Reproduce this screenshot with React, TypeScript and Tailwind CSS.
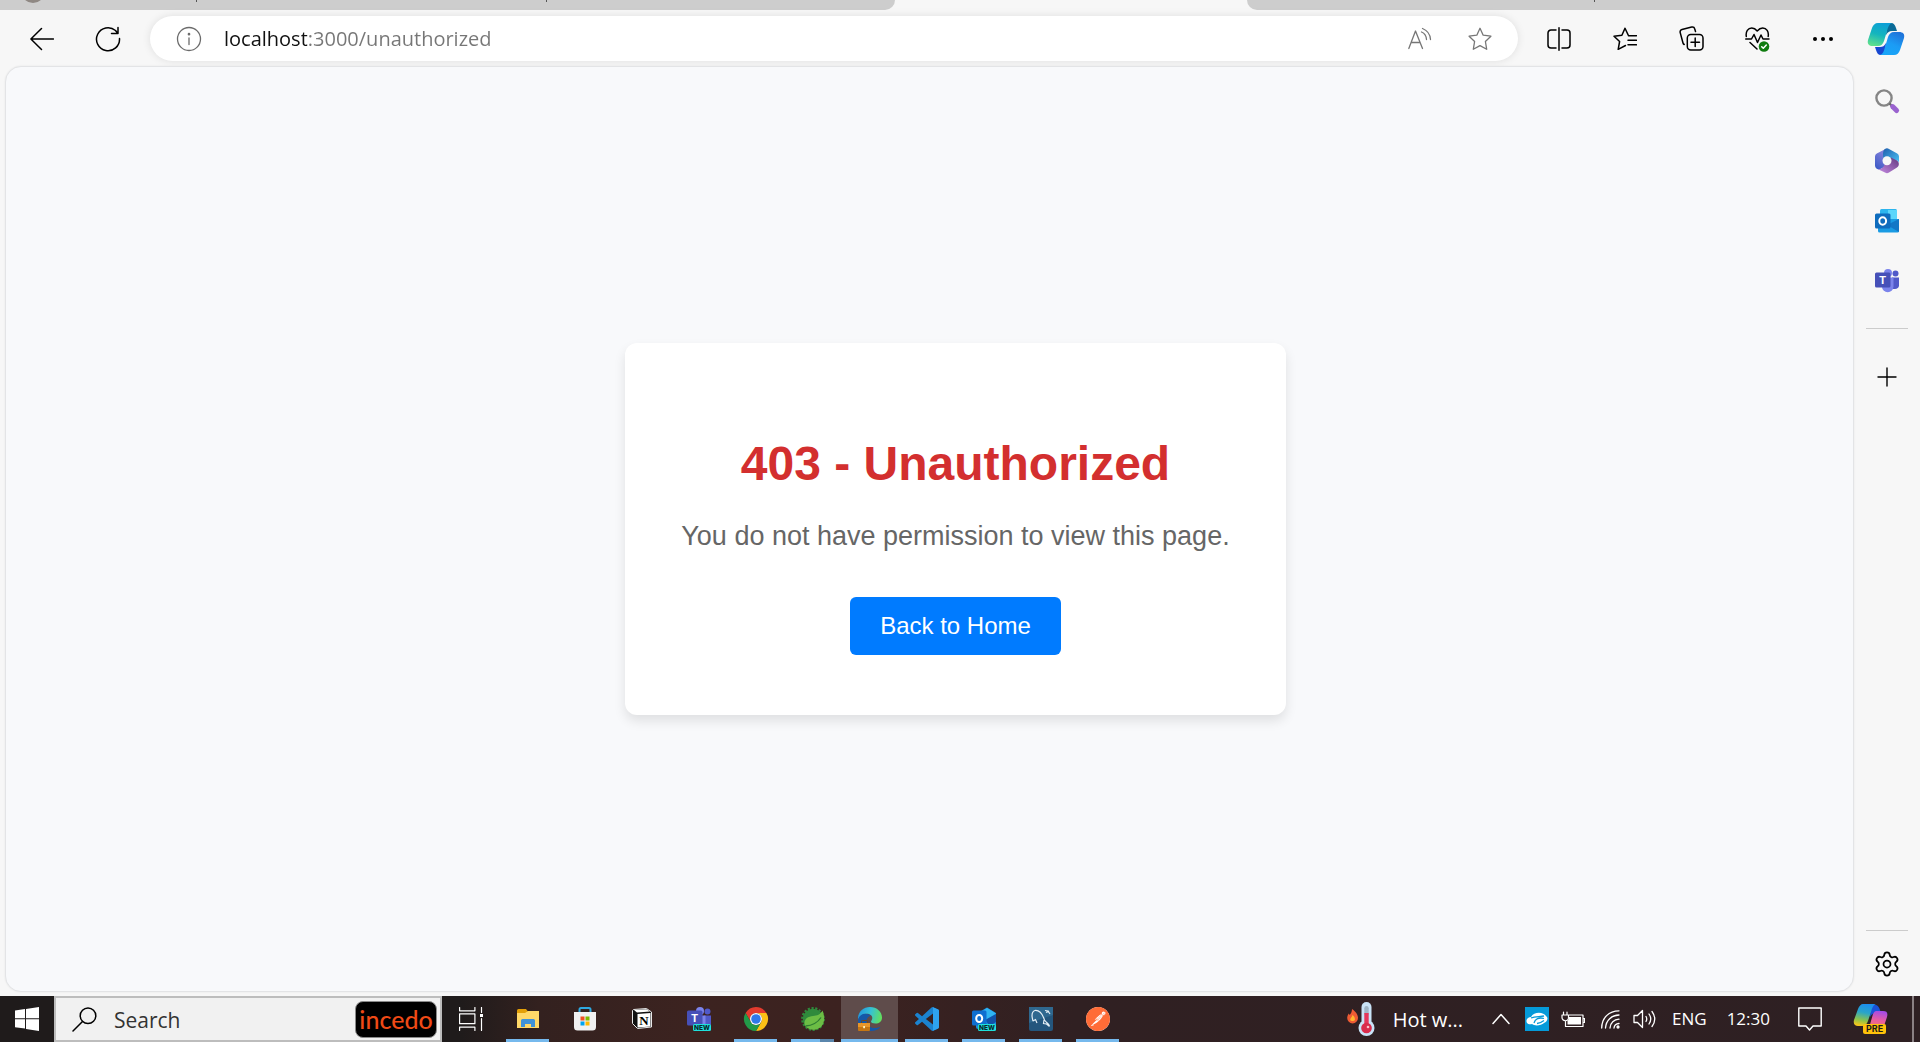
import type { ReactNode } from "react";
import { Settings } from "lucide-react";
import { SiPostman } from "react-icons/si";

function Line({ w = 24, h = 24, sw = 1.3, className = "", children }: { w?: number; h?: number; sw?: number; className?: string; children: ReactNode }) {
  return (
    <svg width={w} height={h} viewBox={`0 0 ${w} ${h}`} fill="none" stroke="currentColor" strokeWidth={sw} strokeLinecap="round" strokeLinejoin="round" className={className} aria-hidden="true">
      {children}
    </svg>
  );
}

function Art({ w = 24, h = 24, children }: { w?: number; h?: number; children: ReactNode }) {
  return (
    <svg width={w} height={h} viewBox={`0 0 ${w} ${h}`} overflow="visible" aria-hidden="true">
      {children}
    </svg>
  );
}

function CopilotIcon() {
  const half = "M10 0h14c-3 1-4 4-5 8l-3 10c-1 3-3 5-6 5H5c-4 0-6-2-5-6L4 5c1-3 3-5 6-5z";
  const fold = "M19 0h4c3 0 4 2 5 5l1 3h-5c-3 0-4 1-6 4z";
  return (
    <Art w={36} h={32}>
      <defs>
        <linearGradient id="cpA" x1="0.6" y1="0" x2="0.3" y2="1"><stop stopColor="#0d9fd6" /><stop offset="0.5" stopColor="#14b5bd" /><stop offset="1" stopColor="#5fe08d" /></linearGradient>
        <linearGradient id="cpB" x1="0.8" y1="0" x2="0.3" y2="1"><stop stopColor="#18a6f8" /><stop offset="0.5" stopColor="#1b9cf5" /><stop offset="1" stopColor="#1f74da" /></linearGradient>
      </defs>
      <path d={fold} fill="#0a6a97" />
      <path d={fold} fill="#1747d1" transform="rotate(180 18 16)" />
      <path d={half} fill="url(#cpA)" />
      <path d={half} fill="url(#cpB)" transform="rotate(180 18 16)" />
    </Art>
  );
}

function CopilotPreviewIcon() {
  return (
    <Art w={34} h={31}>
      <defs>
        <linearGradient id="pvA" x1="0.6" y1="0" x2="0.4" y2="1"><stop stopColor="#1b8df0" /><stop offset="0.4" stopColor="#2aa5c8" /><stop offset="0.75" stopColor="#8cc34b" /><stop offset="1" stopColor="#f5c51b" /></linearGradient>
        <linearGradient id="pvB" x1="0.6" y1="0" x2="0.4" y2="1"><stop stopColor="#a44be6" /><stop offset="0.5" stopColor="#e85da0" /><stop offset="1" stopColor="#f77d6b" /></linearGradient>
      </defs>
      <path d="M17 1h4c3 0 4 2 5 5l1 3h-5c-3 0-4 1-6 4z" fill="#1a52d8" />
      <path d="M9 0h13c-3 1-4 4-5 8l-3 9c-1 3-3 5-6 5H4c-3 0-5-2-4-6L4 5c1-3 3-5 5-5z" fill="url(#pvA)" />
      <path d="M22 7h7c4 0 5 2 4 6l-4 12H12c3-1 4-4 5-8l2-7c1-2 2-3 3-3z" fill="url(#pvB)" />
      <rect x="9" y="20" width="23" height="10" rx="2" fill="#ffc20a" />
      <text x="20.5" y="28" textAnchor="middle" fontSize="9" fontWeight="700" fontFamily="Inter, sans-serif" fill="#1a1a1a">PRE</text>
    </Art>
  );
}

function SearchColor() {
  return (
    <Art>
      <circle cx="9" cy="9" r="7.6" fill="none" stroke="#858585" strokeWidth="2.4" />
      <path d="M14.5 14.5l3 3" stroke="#6b6b6b" strokeWidth="2.4" />
      <path d="M17.6 17.6l4 4" stroke="#9a63cf" strokeWidth="5" strokeLinecap="round" />
    </Art>
  );
}

function Office() {
  return (
    <Art w={24} h={26}>
      <defs>
        <linearGradient id="ofA" x1="0" y1="1" x2="0.6" y2="0"><stop stopColor="#3656c4" /><stop offset="1" stopColor="#8b86dd" /></linearGradient>
        <linearGradient id="ofB" x1="0" y1="0" x2="1" y2="1"><stop stopColor="#1f5fae" /><stop offset="1" stopColor="#4cc3f5" /></linearGradient>
        <linearGradient id="ofC" x1="0" y1="1" x2="1" y2="0"><stop stopColor="#c78be4" /><stop offset="1" stopColor="#62397f" /></linearGradient>
      </defs>
      <path d="M11 .8L1.800 5.600A3.500 3.500 0 0 0 0 8.600v9c0 3 3 4.700 5.500 3.300L13 17V6z" fill="url(#ofA)" />
      <path d="M10 .9c1.300-.8 2.700-.8 4 0l8.200 4.700A3.500 3.500 0 0 1 24 8.600V15c0-1-.8-2-1.800-2.600L14 14 8 9.500v-4C8 3.500 8.600 1.800 10 .9z" fill="url(#ofB)" />
      <path d="M3 21.300c2 0 3.500-.9 5-1.800l4-7 4-3 6 3.100c2.300 1.400 2.600 5.400 0 7l-8 5c-1.300.8-2.700.8-4 0z" fill="url(#ofC)" />
      <circle cx="12" cy="12.800" r="4.500" fill="#f7f7f7" />
    </Art>
  );
}

function Outlook() {
  return (
    <Art>
      <rect x="5" y="0" width="17" height="13" rx="1.500" fill="#2cb5ee" />
      <rect x="13" y="1" width="9" height="9" fill="#5bd6fb" />
      <path d="M3 10h21v12a1.500 1.500 0 0 1-1.500 1.500h-18A1.500 1.500 0 0 1 3 22z" fill="#1a9be3" />
      <path d="M24 10v13L12 16z" fill="#1377c6" />
      <rect x="0" y="4.500" width="15.500" height="15" rx="1.500" fill="#0f6cbd" />
      <ellipse cx="7.700" cy="12" rx="3.400" ry="3.800" fill="none" stroke="#fff" strokeWidth="2" />
    </Art>
  );
}

function TeamsShape() {
  return (
    <>
      <circle cx="13" cy="4" r="4" fill="#7b83eb" />
      <circle cx="20.500" cy="4.500" r="3" fill="#5059c9" />
      <path d="M17 8.500h7v8c0 2-2 3.500-4 3.500h-3z" fill="#5059c9" />
      <path d="M7 8.500h11.500v9a5.700 5.700 0 0 1-11.500 0z" fill="#7b83eb" />
      <rect x="0" y="3.500" width="15.500" height="15" rx="1.500" fill="#4650b8" />
      <text x="7.700" y="15" textAnchor="middle" fontSize="11" fontWeight="700" fontFamily="Liberation Sans, sans-serif" fill="#fff">T</text>
    </>
  );
}

function NewTag() {
  return (
    <>
      <rect x="6" y="17" width="18" height="7" rx="1.500" fill="#1fe0dc" />
      <text x="15" y="23" textAnchor="middle" fontSize="6.500" fontWeight="800" fontFamily="Inter, sans-serif" fill="#06282c">NEW</text>
    </>
  );
}

function Explorer() {
  return (
    <Art w={22} h={20}>
      <path d="M0 1.500A1.500 1.500 0 0 1 1.500 0H9l2 2.500L9 5H0z" fill="#e3a008" />
      <path d="M0 4h8l3-2h11v17H0z" fill="#ffd868" />
      <path d="M4 18v-6.500A1.500 1.500 0 0 1 5.500 10h11a1.500 1.500 0 0 1 1.500 1.500V18h-4v-3H8v3z" fill="#3f92d8" />
    </Art>
  );
}

function Store() {
  return (
    <Art w={24} h={24}>
      <path d="M6.500 6V2.500A1.500 1.500 0 0 1 8 1h8a1.500 1.500 0 0 1 1.500 1.500V6" fill="none" stroke="#2ea9e0" strokeWidth="2" />
      <path d="M1 5h22v15a3.500 3.500 0 0 1-3.500 3.500h-15A3.500 3.500 0 0 1 1 20z" fill="#f1f1f1" />
      <rect x="7.500" y="9.500" width="4" height="4" fill="#f25022" />
      <rect x="12.500" y="9.500" width="4" height="4" fill="#7fba00" />
      <rect x="7.500" y="14.500" width="4" height="4" fill="#00a4ef" />
      <rect x="12.500" y="14.500" width="4" height="4" fill="#ffb900" />
    </Art>
  );
}

function Notion() {
  return (
    <Art w={20} h={21}>
      <path d="M1.500 1.500l13-1 5 3.500v15l-14 1.500-5-5v-13z" fill="#111" stroke="#e8e8e8" strokeWidth="1" strokeLinejoin="round" />
      <path d="M2 2l12.500-.8L18 3.500l-13 1z" fill="#fff" />
      <path d="M5.500 6l13-1v13.500l-13 1z" fill="#fff" />
      <text x="12" y="17" textAnchor="middle" fontSize="13" fontWeight="700" fontFamily="Liberation Serif, serif" fill="#000">N</text>
    </Art>
  );
}

function Chrome() {
  return (
    <Art>
      <path d="M1.600 6A12 12 0 0 1 22.400 6H12A6 6 0 0 0 6.800 15z" fill="#e33b2e" />
      <path d="M22.400 6A12 12 0 0 1 12 24L17.200 15A6 6 0 0 0 12 6z" fill="#fbc116" />
      <path d="M12 24A12 12 0 0 1 1.600 6L6.800 15A6 6 0 0 0 17.200 15z" fill="#229a48" />
      <circle cx="12" cy="12" r="6" fill="#fff" />
      <circle cx="12" cy="12" r="4.800" fill="#2f79ea" />
    </Art>
  );
}

function Spring() {
  return (
    <Art>
      <circle cx="12" cy="12" r="10.800" fill="none" stroke="#2f8a3c" strokeWidth="2.200" strokeDasharray="2.200 1.570" />
      <circle cx="12" cy="12" r="10.200" fill="#2f8a3c" />
      <path d="M21.500 3.500c3 7 2.500 17-6.500 19-4.500.9-8-.5-11-3.500C2 13 6 9.500 12 9c4-.3 7.500-1.500 9.500-5.500z" fill="#6cbd45" />
      <path d="M4.500 19c6-.4 11.500-2.500 15.500-8.500" fill="none" stroke="#2f7d33" strokeWidth="1.300" />
    </Art>
  );
}

function Edge() {
  return (
    <Art>
      <defs>
        <linearGradient id="edA" x1="0" y1="0.300" x2="1" y2="0.500"><stop stopColor="#2394dc" /><stop offset="0.500" stopColor="#35c1d6" /><stop offset="1" stopColor="#62e05e" /></linearGradient>
      </defs>
      <path d="M0 13C-.5 5 5 0 12 0s12 5 12 10.500c0 4-3 6-6.500 6-3 0-4.500-1-4.500-2 0-.8 1.300-1.500 1.300-3.500C14.300 8 10.500 6 7 7c-4 1-6 3-7 6z" fill="url(#edA)" />
      <path d="M0 13c1-4 3.500-6 7-6.200 2.500 0 4.500.7 6 2-3 .5-5 3.200-4.500 6.200.6 4 5 6.700 9.500 6 2-.3 3.500-1 4.500-1-2.500 3-6.500 4.300-10.500 4C5 23.500 0 19 0 13z" fill="#1557a8" />
      <path d="M3.500 16v-1.500a1 1 0 0 1 1-1h4a1 1 0 0 1 1 1V16" fill="none" stroke="#7a4a12" strokeWidth="1" />
      <rect x="0" y="16" width="12" height="8" rx="1" fill="#c67612" />
      <path d="M0 16h12v4H0z" fill="#e8962a" />
      <rect x="5.200" y="19" width="1.800" height="2.200" fill="#fff0b8" />
    </Art>
  );
}

function Code() {
  return (
    <Art>
      <path d="M23.150 2.587L18.210.210a1.494 1.494 0 0 0-1.705.290l-9.460 8.630-4.120-3.128a.999.999 0 0 0-1.276.057L.327 7.261A1 1 0 0 0 .326 8.740L3.899 12 .326 15.260a1 1 0 0 0 .001 1.479L1.650 17.940a.999.999 0 0 0 1.276.057l4.120-3.128 9.460 8.630a1.492 1.492 0 0 0 1.704.290l4.942-2.377A1.500 1.500 0 0 0 24 20.060V3.939a1.500 1.500 0 0 0-.850-1.352zm-5.146 14.861L10.826 12l7.178-5.448v10.896z" fill="#1b83d0" />
      <path d="M18 .2l5.200 2.400c.5.300.8.800.8 1.400v16c0 .6-.3 1.100-.8 1.400L18 23.800z" fill="#2ea3f0" />
    </Art>
  );
}

function NewOutlook() {
  return (
    <Art>
      <path d="M4 7l11-6.500L24 6v14a2 2 0 0 1-2 2H6a2 2 0 0 1-2-2z" fill="#1a8fe0" />
      <path d="M6 7l9-6 9 5.500-10 7z" fill="#2fb4f2" />
      <path d="M13 13l11-6v8l-6 4z" fill="#1151a8" />
      <rect x="0" y="3.500" width="14.500" height="15" rx="1.500" fill="#0f6fd0" />
      <ellipse cx="7.200" cy="11.500" rx="3" ry="3.500" fill="none" stroke="#fff" strokeWidth="2" />
      <NewTag />
    </Art>
  );
}

function MySql() {
  return (
    <Art>
      <rect width="24" height="24" rx="2" fill="#24567d" />
      <path d="M0 0h24v8L0 16z" fill="#2f688f" />
      <path d="M4 14C2.500 9 3 4.500 6 3.500c5-.5 8 5 9.500 9.500 1.500 2.500 4 3.500 5 6M4 14l2.500-1.500L8 16M15 13l-.5 3.500 3 .5 3 2.500M16 3.500l3 .5 2 3M17 5.500l3-1.500" fill="none" stroke="#e4eef5" strokeWidth="1.200" />
    </Art>
  );
}

function Postman() {
  return (
    <span className="block rounded-full bg-white">
      <SiPostman className="size-6 text-[#ff6c37]" />
    </span>
  );
}

function TaskView() {
  return (
    <Line w={24} h={24} sw={1.2}>
      <path d="M.6.5v3.300h15.300V.5M.6 23.500v-3.300h15.300v3.300M.6 6.800h15.300v9.900H.6zM22.500.5v5M22.500 11.500v12" />
      <path d="M21 7h3v3h-3z" fill="currentColor" stroke="none" />
    </Line>
  );
}

const toolbarButton = "flex h-11 w-[66px] items-center justify-center";
const slot = "flex h-full w-[57px] flex-col items-center";

function AppSlot({ label, bar = "on", children }: { label: string; bar?: "on" | "off" | "active" | "split"; children: ReactNode }) {
  return (
    <button type="button" aria-label={label} className={bar === "active" ? slot + " bg-[#5f4c4b]" : slot}>
      <span className="flex flex-1 items-center pt-0.5">{children}</span>
      <span className={bar === "active" ? "h-[3px] w-full bg-[#76b9ed]" : bar === "split" ? "h-[3px] w-[43px] border-r-[14px] border-[#5a86ac] bg-[#76b9ed]" : bar === "on" ? "h-[3px] w-[43px] bg-[#76b9ed]" : "h-[3px] w-[43px]"} />
    </button>
  );
}

function Toolbar() {
  return (
    <div className="flex h-[57px] items-center text-black">
      <div className="flex pl-[9px] pr-[9px]">
        <button type="button" aria-label="Back" className={toolbarButton}>
          <Line sw={1.5}><path d="M11.500 1.500L.9 12l10.600 10.500M.9 12H23.500" /></Line>
        </button>
        <button type="button" aria-label="Refresh" className={toolbarButton}>
          <Line w={26} h={26} sw={1.5}><path d="M24.500 12.500A11.500 11.500 0 1 1 20.500 4.500L22.500 7M23 1.500V7.500H16.500" /></Line>
        </button>
      </div>
      <div className="flex h-[45px] flex-1 items-center rounded-full bg-white pl-[26px] pr-2 shadow-[0_0_8px_rgba(0,0,0,0.1)]">
        <button type="button" aria-label="View site information" className="text-[#6b6b6b]">
          <Line w={26} h={26}><circle cx="13" cy="13" r="11.500" /><path d="M13 12v6.500" /><circle cx="13" cy="8.200" r="0.700" fill="currentColor" /></Line>
        </button>
        <input
          type="text"
          aria-label="Address"
          defaultValue="localhost:3000/unauthorized"
          className="ml-[22px] min-w-0 flex-1 bg-[linear-gradient(to_right,#111111_83px,#767676_83px)] bg-clip-text font-['Open_Sans',sans-serif] text-[20px] text-transparent outline-none"
        />
        <button type="button" aria-label="Read aloud" className="flex w-[60px] justify-center text-[#767676]">
          <Line><path d="M.8 21.500L7.500 4l7 17.500M3.200 15.500h8.800M13.500 5q4.700 2 5 7.500M14.500 1.500q7.500 3 8 11" /></Line>
        </button>
        <button type="button" aria-label="Add to favorites" className="flex w-[60px] justify-center text-[#767676]">
          <Line><path d="M12 1.300l3.200 6.900 7.700 1-5.500 5.300 1.300 7.800L12 18.600l-6.700 3.700 1.300-7.800L1.100 9.200l7.700-1z" /></Line>
        </button>
      </div>
      <div className="flex pl-2">
        <button type="button" aria-label="Split screen" className={toolbarButton}>
          <Line sw={1.5}><path d="M9 3H4a3 3 0 0 0-3 3v12a3 3 0 0 0 3 3h5M15 3h5a3 3 0 0 1 3 3v12a3 3 0 0 1-3 3h-5M12 .8v22.400" /></Line>
        </button>
        <button type="button" aria-label="Favorites" className={toolbarButton}>
          <Line sw={1.5}><path d="M15.300 8.200L12 1.300 8.900 8.200 1 9.200l5.600 5.300-1.400 7.800L12.500 18.500M15.500 8.700h8M15 13.300h8.500M15 17.800h8.500" /></Line>
        </button>
        <button type="button" aria-label="Collections" className={toolbarButton}>
          <Line w={25} h={25} sw={1.5}><path d="M16.500 5.500l-.8-2.700A2.500 2.500 0 0 0 12.700 1L3 3.500A2.500 2.500 0 0 0 1.200 6.600L4 17a2.500 2.500 0 0 0 1.200 1.500" /><rect x="8.300" y="8.500" width="15.700" height="15.500" rx="3.500" /><path d="M16.200 12v8.500M12 16.200h8.500" /></Line>
        </button>
        <button type="button" aria-label="Browser essentials" className={toolbarButton}>
          <Line w={25} h={26} sw={1.5}>
            <path d="M1.300 10.500C.5 5.500 3 2 6.800 2 9.500 2 11 3.500 12.200 5 13.500 3.500 15 2 17.700 2c3.800 0 6.300 3.500 5.500 8.500M.7 13h5.800L9 8.500l3.500 8L16 9l2 4h6M5 16.500l7 6.500" />
            <circle cx="19" cy="20.500" r="5.300" fill="#107c10" stroke="none" />
            <path d="M16.700 20.700l1.600 1.600 3-3.200" stroke="#fff" />
          </Line>
        </button>
        <button type="button" aria-label="Settings and more" className={toolbarButton}>
          <Art><circle cx="4" cy="12" r="2" /><circle cx="12" cy="12" r="2" /><circle cx="20" cy="12" r="2" /></Art>
        </button>
        <button type="button" aria-label="Copilot" className="flex h-11 w-[64px] items-center justify-center pr-1"><CopilotIcon /></button>
      </div>
    </div>
  );
}

function Sidebar() {
  const item = "flex h-[60px] w-full items-center justify-center";
  return (
    <aside className="flex w-[66px] flex-col items-center pt-1">
      <button type="button" aria-label="Search" className={item}><SearchColor /></button>
      <button type="button" aria-label="Microsoft 365" className={item}><Office /></button>
      <button type="button" aria-label="Outlook" className={item}><Outlook /></button>
      <button type="button" aria-label="Teams" className={item}><Art><TeamsShape /></Art></button>
      <hr className="mt-[17px] w-[42px] border-[#cccccc]" />
      <button type="button" aria-label="Customize" className="mt-[18px] flex h-[60px] w-full items-center justify-center">
        <Line w={20} h={20} sw={1.4}><path d="M10 1v18M1 10h18" /></Line>
      </button>
      <hr className="mt-auto w-[42px] border-[#cccccc]" />
      <button type="button" aria-label="Settings" className="flex h-[65px] w-full items-center justify-center">
        <Settings size={28} strokeWidth={1.5} />
      </button>
    </aside>
  );
}

function Taskbar() {
  return (
    <footer className="flex h-[46px] items-center bg-[linear-gradient(to_right,#1f1b1b_0%,#1f1b1b_24%,#33211f_28%,#3c2320_36%,#3c2220_44%,#302022_56%,#2e2023_100%)] font-['Open_Sans',sans-serif] text-white">
      <button type="button" aria-label="Start" className="flex h-full w-[54px] items-center justify-center">
        <Art><path d="M0 3.500l10-1.400V11.300H0zM11 2L24 .1v11.200H11zM0 12.300h10v9.300L0 20.300zM11 12.300h13V24l-13-1.900z" fill="#fff" /></Art>
      </button>
      <label className="flex h-full w-[388px] items-center border-2 border-[#bdbdbd] bg-[#f1f1f1] pl-4 pr-[3px] text-[#333333]">
        <Line w={25} h={25} sw={1.5} className="shrink-0 text-black"><circle cx="16" cy="8.800" r="7.800" /><path d="M10.500 14.500L1 24" /></Line>
        <input type="text" aria-label="Search" placeholder="Search" className="ml-[17px] h-full min-w-0 flex-1 pt-0.5 text-[21px] outline-none placeholder:text-[#333333]" />
        <span className="flex h-[37px] w-[82px] items-center justify-center rounded-lg border border-[#8a8a8a] bg-black font-['Lato',sans-serif] text-[25px] leading-none font-medium text-[#f04a16]">
          incedo
        </span>
      </label>
      <div className="flex h-full">
        <AppSlot label="Task View" bar="off"><TaskView /></AppSlot>
        <AppSlot label="File Explorer"><Explorer /></AppSlot>
        <AppSlot label="Microsoft Store" bar="off"><Store /></AppSlot>
        <AppSlot label="Notion" bar="off"><Notion /></AppSlot>
        <AppSlot label="Microsoft Teams" bar="off"><Art><TeamsShape /><NewTag /></Art></AppSlot>
        <AppSlot label="Google Chrome"><Chrome /></AppSlot>
        <AppSlot label="Spring Tool Suite" bar="split"><Spring /></AppSlot>
        <AppSlot label="Microsoft Edge" bar="active"><Edge /></AppSlot>
        <AppSlot label="Visual Studio Code"><Code /></AppSlot>
        <AppSlot label="Outlook (new)"><NewOutlook /></AppSlot>
        <AppSlot label="MySQL Workbench"><MySql /></AppSlot>
        <AppSlot label="Postman"><Postman /></AppSlot>
      </div>
      <div className="ml-auto flex h-full items-center">
        <button type="button" className="flex items-center gap-[18px] text-[20px]">
          <Art w={28} h={34}>
            <path d="M5 7c3 2 6 5 6 9a5.300 5.300 0 0 1-10.800 0c0-2 .8-3 1.500-4.500l1 1.500C4 11.500 5 9.500 5 7z" fill="#ee5b34" />
            <path d="M5.500 13c2 1.500 2.800 3 2.300 5-.5 1.300-4 1.300-4.500 0-.4-1.500 1.500-2.500 2.200-5z" fill="#ffb52e" />
            <rect x="14.500" y="0" width="10" height="26" rx="5" fill="#c9e3f7" />
            <circle cx="19.500" cy="26" r="8" fill="#c9e3f7" />
            <rect x="17.300" y="4" width="4.400" height="10" rx="2.200" fill="#9fb4c5" />
            <rect x="17.300" y="11" width="4.400" height="14" fill="#e5365a" />
            <circle cx="19.500" cy="26" r="5.300" fill="#d92c4c" />
            <circle cx="21" cy="25" r="1.300" fill="#ffc0cb" />
          </Art>
          <span className="pt-0.5">Hot w...</span>
        </button>
        <button type="button" aria-label="Show hidden icons" className="ml-[29px]"><Line w={18} h={12} sw={1.5}><path d="M1 10.500L9 1.500l8 9" /></Line></button>
        <button type="button" aria-label="Security client" className="ml-[15px]">
          <Art>
            <rect width="24" height="24" fill="#059ad9" />
            <path d="M2 16c-2-4 2-6 4-6 3-6 13-5 15-1 3 2 1 6-2 7-3 3-10 3-12 1-2 .5-4 .2-5-1z" fill="#fff" />
            <path d="M9 16c1-4 5-6 10-4.500M6 11c4-2 9-1 13-2M12 16.500c3 0 5-1.500 7-3" fill="none" stroke="#059ad9" strokeWidth="1.300" />
          </Art>
        </button>
        <button type="button" aria-label="Battery" className="ml-3">
          <Line w={24} h={17} sw={1.2}><path d="M8 4h14v11.500H4.500V10M22.500 7.500h1v4h-1M2.500 1v3M6 1v3M1 4h6.500v2.500a3 3 0 0 1-6.500 0z" /><path d="M8 6h12v7.500H6.500V10L8 8z" fill="currentColor" stroke="none" /></Line>
        </button>
        <button type="button" aria-label="Network" className="ml-4">
          <Line w={19} h={19} sw={1.3}><path d="M.7 18C.7 8 8 .8 18 .8" /><path d="M4.500 18C5 10.500 10.500 5.200 18 5M9 18c.3-5 4-8.500 9-8.800M13 18c.3-2.500 2-4.300 5-4.500" /><circle cx="17" cy="17" r="1" fill="currentColor" /></Line>
        </button>
        <button type="button" aria-label="Volume" className="ml-[13px]">
          <Line w={23} h={20} sw={1.3}><path d="M1 6.500h3.500L9.500 1.500v17L4.500 13.500H1zM13 7.500q1.500 2.500 0 5M16 5q3.500 5 0 10M19 2.500q5.500 7.500 0 15" /></Line>
        </button>
        <button type="button" className="ml-4 text-[17px]">ENG</button>
        <button type="button" className="ml-5 text-[17px]">12:30</button>
        <button type="button" aria-label="Notifications" className="ml-7"><Line w={24} h={24} sw={1.4}><path d="M.8 1h22.400v18H15l-3.500 4L8 19H.8z" /></Line></button>
        <button type="button" aria-label="Copilot preview" className="ml-8"><CopilotPreviewIcon /></button>
        <button type="button" aria-label="Show desktop" className="ml-6 h-full w-2 border-l-2 border-[#8a8184]" />
      </div>
    </footer>
  );
}

export default function App() {
  return (
    <div className="flex min-h-screen flex-col bg-[#f7f7f7]">
      <div className="flex h-2.5 justify-between overflow-hidden">
        <div className="flex flex-[895] items-start rounded-br-xl bg-[#cdcdcd]">
          <span className="-mt-[21px] ml-[21px] size-6 rounded-full bg-[#8f8883]" />
          <span className="ml-[151px] h-0.5 w-px bg-[#555555]" />
          <span className="ml-[349px] h-0.5 w-px bg-[#555555]" />
        </div>
        <div className="flex-[352]" />
        <div className="flex flex-[673] items-start rounded-bl-xl bg-[#cdcdcd]">
          <span className="ml-[347px] h-0.5 w-px bg-[#555555]" />
        </div>
      </div>
      <Toolbar />
      <div className="flex flex-1">
        <main className="-mt-px mb-1 ml-[5px] flex flex-1 items-center justify-center rounded-2xl border border-[#e3e4e6] bg-[#f8f9fb] pl-[52px] font-['Liberation_Sans',Arial,sans-serif] shadow-[0_0_2px_rgba(0,0,0,0.08)]">
          <section className="rounded-xl bg-white px-14 pt-[93px] pb-[60px] text-center shadow-[0_6px_12px_rgba(0,0,0,0.1)]">
            <h1 className="text-[48px] leading-[56px] font-bold text-[#d32f2f]">403 - Unauthorized</h1>
            <p className="mt-7 text-[27px] leading-8 text-[#666666]">You do not have permission to view this page.</p>
            <a href="/" className="mt-[45px] inline-block rounded-md bg-[#007bff] px-[30px] py-[15px] text-[24px] leading-7 text-white">Back to Home</a>
          </section>
        </main>
        <Sidebar />
      </div>
      <Taskbar />
    </div>
  );
}
